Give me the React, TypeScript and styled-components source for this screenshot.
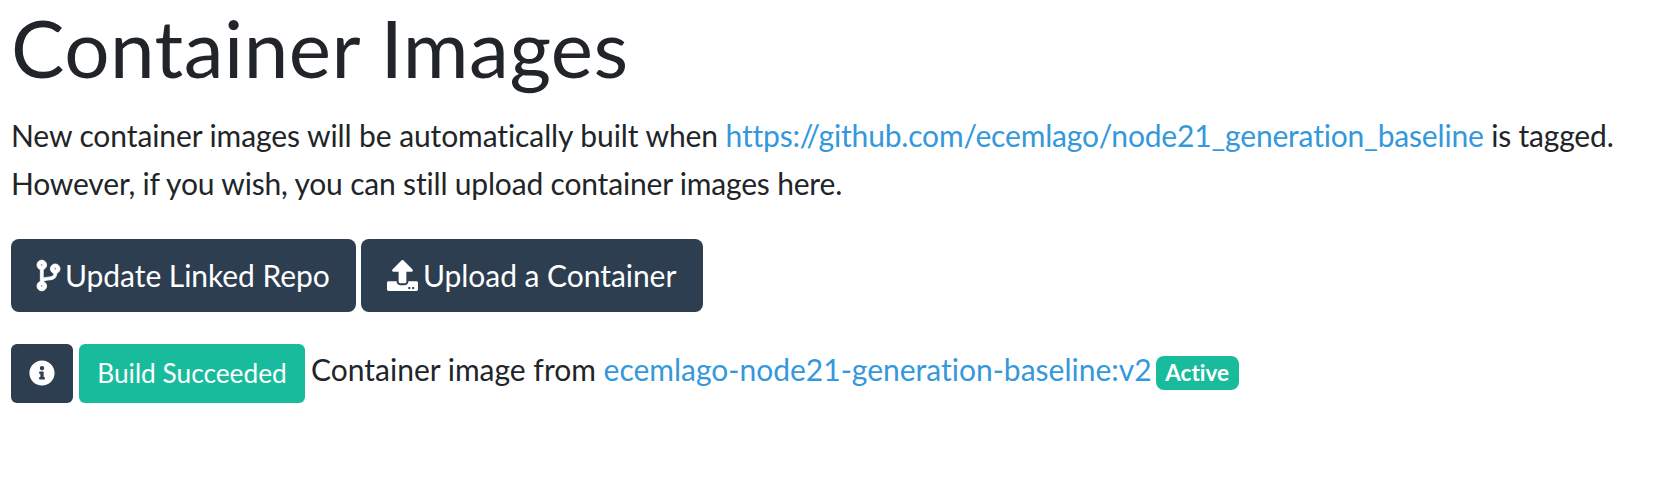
import React from 'react';
import styled, { createGlobalStyle } from 'styled-components';
import { FaCodeBranch, FaUpload, FaInfoCircle } from 'react-icons/fa';

const Global = createGlobalStyle`
  *{box-sizing:border-box}
  body{margin:0;background:#fff;color:#212529;font-family:Lato,"Liberation Sans",sans-serif;font-size:30px;line-height:48px;font-variant-ligatures:none;}
`;
const Page = styled.main`padding:0 11px;`;
const Title = styled.h1`margin:0 0 16px;font-size:80px;line-height:95px;font-weight:400;letter-spacing:.5px;`;
const Text = styled.p`margin:0 0 32px;white-space:nowrap;`;
const Link = styled.a`color:#3498db;text-decoration:none;`;
const Phrase = styled.span<{ $tracking: number }>`letter-spacing:${p => p.$tracking}px;`;
const Row = styled.div<{ $gap: number }>`display:flex;gap:${p => p.$gap}px;`;
const Button = styled.button<{ $width: number }>`
  width:${p => p.$width}px;height:73px;padding:0 0 2px 26px;border:0;border-radius:8px;background:#2c3e50;color:#fff;
  font:400 30px/48px Lato,sans-serif;font-variant-ligatures:none;display:flex;align-items:center;gap:5px;white-space:nowrap;
  letter-spacing:-.05px;
`;
const BranchIcon = styled(FaCodeBranch)`
  width:23px;height:31px;flex:none;margin-top:2px;overflow:visible;
  path{stroke:#fff;stroke-width:14px;}
`;
const UploadIcon = styled(FaUpload)`width:31px;height:31px;flex:none;margin-top:2px;`;
const InfoIcon = styled(FaInfoCircle)`width:26px;height:26px;flex:none;margin-top:1px;`;
const BuildRow = styled(Row)`margin-top:32px;`;
const SmallButton = styled(Button)<{ $success?: boolean }>`
  height:59px;padding:0 0 2px;justify-content:center;font-size:26.25px;letter-spacing:0;border-radius:6px;background:${p => (p.$success ? '#18bc9c' : '#2c3e50')};
`;
const Label = styled.span`margin-top:1px;margin-right:-2px;white-space:nowrap;`;
const Badge = styled.span`
  margin-top:12px;width:83px;height:34px;border-radius:8px;background:#18bc9c;color:#fff;
  font-size:22.5px;line-height:34px;font-weight:700;text-align:center;
`;

export default function App() {
  return (
    <Page>
      <Global />
      <Title>Container Images</Title>
      <Text>
        <Phrase $tracking={-0.09}>New container images will be automatically built when </Phrase>
        <Phrase $tracking={-0.18}>
          <Link>https://github.com/ecemlago/node21_generation_baseline</Link> is tagged.
        </Phrase>
        <br />
        <Phrase $tracking={-0.18}>However, if you wish, you can still upload container images here.</Phrase>
      </Text>
      <Row $gap={5}>
        <Button $width={345}><BranchIcon />Update Linked Repo</Button>
        <Button $width={342}><UploadIcon />Upload a Container</Button>
      </Row>
      <BuildRow $gap={6}>
        <SmallButton $width={62} aria-label="Build information"><InfoIcon /></SmallButton>
        <SmallButton $width={226} $success>Build Succeeded</SmallButton>
        <Label>Container image from <Link>ecemlago-node21-generation-baseline:v2</Link></Label>
        <Badge>Active</Badge>
      </BuildRow>
    </Page>
  );
}
